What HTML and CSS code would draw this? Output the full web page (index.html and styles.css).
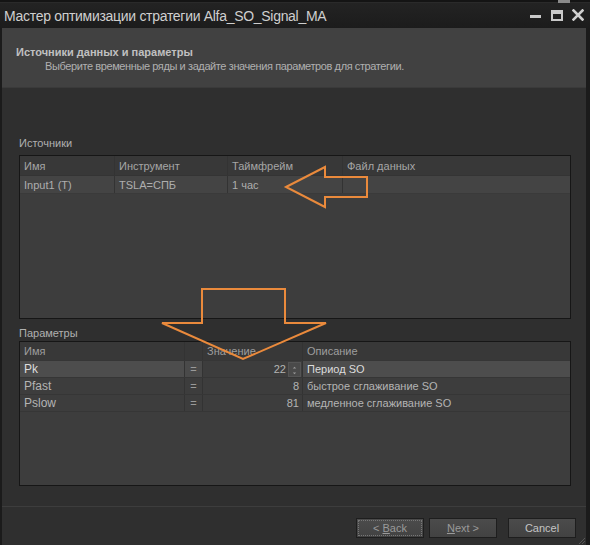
FILE: index.html
```html
<!DOCTYPE html>
<html lang="ru">
<head>
<meta charset="utf-8">
<title>Мастер оптимизации</title>
<link rel="stylesheet" href="styles.css">
</head>
<body>
<div class="window">
  <div class="topstrip"><span class="ghost"></span></div>
  <div class="titlebar">
    <span class="title">Мастер оптимизации стратегии Alfa_SO_Signal_MA</span>
    <div class="wbtns">
      <svg class="wb" width="12" height="12" viewBox="0 0 12 12"><rect x="0" y="6" width="11" height="3" fill="#c9c9c9"/></svg>
      <svg class="wb" width="12" height="12" viewBox="0 0 12 12"><rect x="1" y="2" width="10" height="9" fill="none" stroke="#c9c9c9" stroke-width="2"/><rect x="1" y="2" width="10" height="3" fill="#c9c9c9"/></svg>
      <svg class="wb" width="12" height="12" viewBox="0 0 12 12"><path d="M1.5 1.5 L10.5 10.5 M10.5 1.5 L1.5 10.5" stroke="#d0d0d0" stroke-width="2.6" stroke-linecap="square"/></svg>
    </div>
  </div>
  <div class="content">
    <div class="header">
      <div class="h-title">Источники данных и параметры</div>
      <div class="h-sub">Выберите временные ряды и задайте значения параметров для стратегии.</div>
    </div>
    <div class="main">
      <div class="label first">Источники</div>
      <div class="grid sources">
        <div class="row head">
          <div class="cell">Имя</div>
          <div class="cell">Инструмент</div>
          <div class="cell">Таймфрейм</div>
          <div class="cell">Файл данных</div>
        </div>
        <div class="row data lit">
          <div class="cell">Input1 (T)</div>
          <div class="cell">TSLA=СПБ</div>
          <div class="cell">1 час</div>
          <div class="cell"></div>
        </div>
      </div>
      <div class="label second">Параметры</div>
      <div class="grid params">
        <div class="prow head">
          <div class="cell">Имя</div>
          <div class="cell"></div>
          <div class="cell">Значение</div>
          <div class="cell">Описание</div>
        </div>
        <div class="prow sel">
          <div class="cell name">Pk</div>
          <div class="cell eq">=</div>
          <div class="cell val"><span>22</span>
            <span class="spin"><svg width="13" height="15" viewBox="0 0 13 15"><path d="M4.5 5 L6.5 3 L8.5 5 Z M4.5 10 L6.5 12 L8.5 10 Z" fill="#9a9a9a"/></svg></span>
          </div>
          <div class="cell desc">Период SO</div>
        </div>
        <div class="prow">
          <div class="cell name">Pfast</div>
          <div class="cell eq">=</div>
          <div class="cell val"><span>8</span></div>
          <div class="cell desc">быстрое сглаживание SO</div>
        </div>
        <div class="prow">
          <div class="cell name">Pslow</div>
          <div class="cell eq">=</div>
          <div class="cell val"><span>81</span></div>
          <div class="cell desc">медленное сглаживание SO</div>
        </div>
      </div>
    </div>
    <div class="footer">
      <button class="btn focus dim"><span>&lt; <u>B</u>ack</span></button>
      <button class="btn dim"><span><u>N</u>ext &gt;</span></button>
      <button class="btn"><span>Cancel</span></button>
      <svg class="grip" width="10" height="10" viewBox="0 0 10 10"><path d="M9 3 L3 9 M9 6 L6 9" stroke="#555" stroke-width="1"/></svg>
    </div>
  </div>
  <svg class="arrows" width="590" height="545" viewBox="0 0 590 545">
    <polygon points="286,187 325,167 325,177 367,177 367,197 325,197 325,207" fill="none" stroke="#ea8a3c" stroke-width="2" stroke-linejoin="miter"/>
    <polygon points="202,289 285,289 285,323 326,323 243,359 162,323 202,323" fill="none" stroke="#ea8a3c" stroke-width="2" stroke-linejoin="miter"/>
  </svg>
</div>
</body>
</html>
```

FILE: styles.css
```css
html, body {
  margin: 0;
  padding: 0;
  background: #2f2f2f;
}
body {
  font-family: "Liberation Sans", "DejaVu Sans", sans-serif;
  font-size: 11px;
  color: #b4b4b4;
}
.window {
  position: relative;
  width: 590px;
  height: 545px;
  display: flex;
  flex-direction: column;
  background: #2f2f2f;
  overflow: hidden;
}
.topstrip {
  height: 3px;
  background: #141414;
  border-bottom: 1px solid #2a2a2a;
  box-sizing: border-box;
  display: flex;
}
.ghost {
  margin-left: 558px;
  width: 12px;
  height: 3px;
  background: #8a8a8a;
}
.titlebar {
  height: 25px;
  background: linear-gradient(#232323, #1c1c1c);
  display: flex;
  align-items: center;
  justify-content: space-between;
  padding: 0 6px 0 4px;
}
.title {
  font-family: "Liberation Sans", sans-serif;
  font-size: 14px;
  color: #cfcfcf;
  letter-spacing: -0.3px;
  margin-top: 1px;
}
.wbtns {
  display: flex;
  gap: 9px;
  align-items: center;
  margin-top: -1px;
}
.content {
  flex: 1;
  display: flex;
  flex-direction: column;
  border-left: 2px solid #1b1b1b;
  border-right: 4px solid #1b1b1b;
  background: #2f2f2f;
}
.header {
  height: 60px;
  background: #414141;
  border-bottom: 1px solid #3a3a3a;
  box-sizing: border-box;
  padding: 17px 0 0 14px;
}
.h-title {
  font-weight: bold;
  color: #c0c0c0;
  font-size: 11px;
  line-height: 14px;
}
.h-sub {
  color: #b0b0b0;
  margin: 0 0 0 29px;
  line-height: 14px;
  letter-spacing: -0.4px;
}
.main {
  flex: 1;
  padding: 0 15px 0 17px;
}
.label {
  line-height: 14px;
  color: #b0b0b0;
}
.label.first { margin-top: 48px; margin-bottom: 5px; }
.label.second { margin-top: 7px; margin-bottom: 1px; }
.grid {
  border: 1px solid #161616;
  background: #3d3d3d;
}
.sources { height: 164px; box-sizing: border-box; }
.params { height: 145px; box-sizing: border-box; }
.row {
  display: grid;
  grid-template-columns: 95px 113px 115px 1fr;
}
.row.head { height: 19px; background: #383838; border-bottom: 1px solid #343434; }
.row.data { height: 17px; background: #444444; border-bottom: 1px solid #3a3a3a; }
.cell {
  padding-left: 4px;
  display: flex;
  align-items: center;
  white-space: nowrap;
  overflow: hidden;
  border-right: 1px solid #333;
}
.row .cell:last-child, .prow .cell:last-child { border-right: none; }
.row.data .cell { color: #aeaeae; }
.prow {
  display: grid;
  grid-template-columns: 165px 18px 100px 1fr;
  height: 17px;
  border-bottom: 1px solid #363636;
  box-sizing: border-box;
}
.prow.head { height: 19px; background: #383838; }
.prow.head .cell { color: #9e9e9e; }
.row.head .cell { color: #a6a6a6; }
.prow .eq { justify-content: center; padding-left: 0; color: #9a9a9a; }
.prow .val { justify-content: flex-end; padding-right: 3px; padding-left: 0; }
.prow .name { font-size: 12px; }
.prow.sel .name, .prow.sel .desc { background: #4d4d4d; color: #dcdcdc; }
.prow.sel .eq { background: #4a4a4a; }
.prow.sel .val { padding-right: 1px; }
.spin {
  margin-left: 2px;
  width: 13px;
  height: 15px;
  background: #4a4a4a;
  border: 1px solid #555;
  box-sizing: border-box;
  display: flex;
}
.footer {
  height: 39px;
  box-sizing: border-box;
  border-top: 1px solid #3d3d3d;
  display: flex;
  align-items: flex-start;
  justify-content: flex-end;
  gap: 5px;
  padding: 11px 10px 0 0;
  position: relative;
}
.btn {
  width: 68px;
  height: 20px;
  border: 1px solid #1e1e1e;
  background: linear-gradient(#4b4b4b, #424242);
  font-family: "Liberation Sans", sans-serif;
  font-size: 11px;
  color: #c4c4c4;
  padding: 0;
}
.btn.dim { color: #9a9a9a; }
.btn.focus {
  outline: 1px dotted #777;
  outline-offset: -3px;
}
.btn:last-of-type { margin-left: 6px; }
.grip { position: absolute; right: 0; bottom: 0; }
.arrows {
  position: absolute;
  left: 0;
  top: 0;
  pointer-events: none;
}
```
